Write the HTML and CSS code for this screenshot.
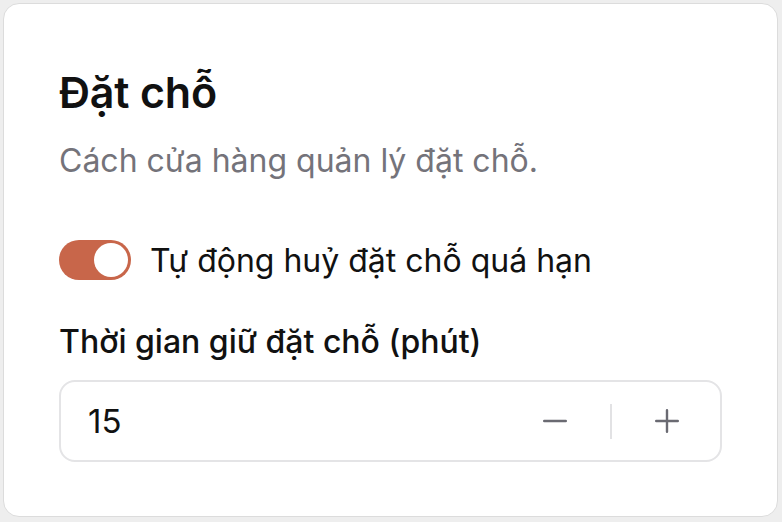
FILE: index.html
```html
<!DOCTYPE html>
<html lang="vi">
<head>
<meta charset="utf-8">
<title>Đặt chỗ</title>
<link rel="stylesheet" href="styles.css">
</head>
<body>
<section class="card">
  <h2 class="card-title">Đặt chỗ</h2>
  <p class="card-desc">Cách cửa hàng quản lý đặt chỗ.</p>

  <label class="switch-row">
    <span class="switch is-on"><span class="switch-knob"></span></span>
    <span class="switch-label">Tự động huỷ đặt chỗ quá hạn</span>
  </label>

  <div class="field">
    <div class="field-label">Thời gian giữ đặt chỗ (phút)</div>
    <div class="stepper">
      <span class="stepper-value">15</span>
      <div class="stepper-actions">
        <button class="stepper-btn" aria-label="Giảm">
          <svg width="24" height="24" viewBox="0 0 24 24"><path d="M1.2 12h21.6" stroke="currentColor" stroke-width="2.4" stroke-linecap="round"/></svg>
        </button>
        <span class="stepper-sep"></span>
        <button class="stepper-btn" aria-label="Tăng">
          <svg width="24" height="24" viewBox="0 0 24 24"><path d="M1.2 12h21.6M12 1.2v21.6" stroke="currentColor" stroke-width="2.4" stroke-linecap="round"/></svg>
        </button>
      </div>
    </div>
  </div>
</section>
</body>
</html>
```

FILE: styles.css
```css
html, body {
  margin: 0;
  height: 100%;
}

body {
  background: #eeeeee;
  padding: 3px 4px 5px 3px;
  box-sizing: border-box;
  font-family: Inter, "Noto Sans", sans-serif;
  color: #111;
}

.card {
  box-sizing: border-box;
  height: 100%;
  background: #fff;
  border: 1px solid #dcdcdc;
  border-radius: 16px;
  padding: 62px 55px 0 55px;
}

.card-title {
  margin: 0;
  font-size: 43px;
  font-weight: 600;
  line-height: 52px;
  letter-spacing: -0.2px;
}

.card-desc {
  margin: 23px 0 0;
  font-size: 32px;
  line-height: 40px;
  color: #74737a;
}

.switch-row {
  display: flex;
  align-items: center;
  gap: 19px;
  margin-top: 58px;
}

/* track with the thumb pushed to the right (on state) */
.switch {
  width: 72px;
  height: 40px;
  border-radius: 20px;
  background: #c8664a;
  display: flex;
  align-items: center;
  justify-content: flex-end;
  padding: 3px;
  box-sizing: border-box;
}

.switch-knob {
  width: 34px;
  height: 34px;
  border-radius: 50%;
  background: #fff;
}

.switch-label {
  font-size: 32px;
  line-height: 40px;
  padding-top: 2px;
}

.field {
  margin-top: 41px;
}

.field-label {
  font-size: 32px;
  font-weight: 500;
  line-height: 40px;
}

.stepper {
  margin-top: 18px;
  height: 82px;
  box-sizing: border-box;
  border: 2px solid #e4e4e6;
  border-radius: 16px;
  display: flex;
  align-items: center;
  justify-content: space-between;
  padding: 0 41px 0 27px;
}

.stepper-value {
  font-size: 33px;
  line-height: 40px;
}

.stepper-actions {
  display: flex;
  align-items: center;
  gap: 43px;
}

.stepper-btn {
  border: 0;
  background: none;
  padding: 0;
  color: #6a6a72;
  display: flex;
}

.stepper-sep {
  width: 2px;
  height: 35px;
  background: #e2e2e4;
}
```
